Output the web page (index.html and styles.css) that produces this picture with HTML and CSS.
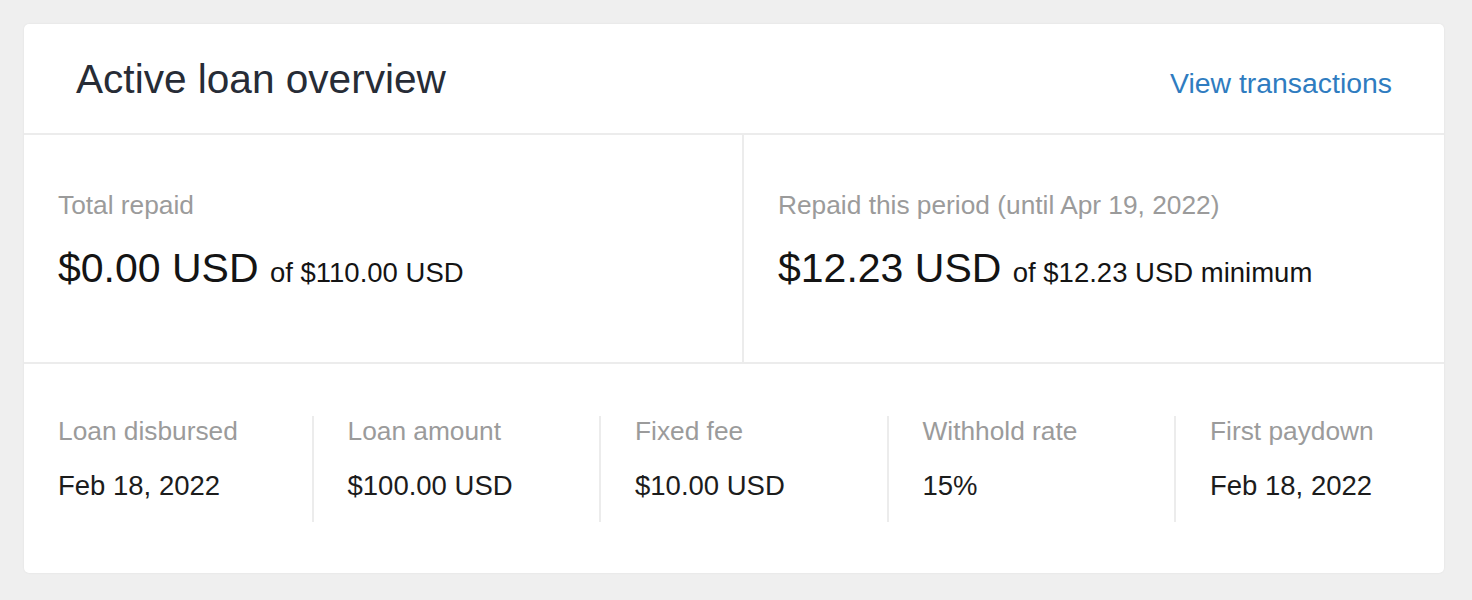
FILE: index.html
```html
<!DOCTYPE html>
<html>
<head>
  <title>Active loan overview</title>
  <link rel="stylesheet" href="styles.css">
</head>
<body>
  <div class="card">
    <div class="card-header">
      <h1>Active loan overview</h1>
      <a href="#" class="link">View transactions</a>
    </div>

    <div class="totals">
      <div class="total">
        <div class="label">Total repaid</div>
        <div class="amount">$0.00 USD <span class="of">of $110.00 USD</span></div>
      </div>
      <div class="total">
        <div class="label">Repaid this period (until Apr 19, 2022)</div>
        <div class="amount">$12.23 USD <span class="of">of $12.23 USD minimum</span></div>
      </div>
    </div>

    <div class="details">
      <div class="detail">
        <div class="label">Loan disbursed</div>
        <div class="value">Feb 18, 2022</div>
      </div>
      <div class="detail">
        <div class="label">Loan amount</div>
        <div class="value">$100.00 USD</div>
      </div>
      <div class="detail">
        <div class="label">Fixed fee</div>
        <div class="value">$10.00 USD</div>
      </div>
      <div class="detail">
        <div class="label">Withhold rate</div>
        <div class="value">15%</div>
      </div>
      <div class="detail">
        <div class="label">First paydown</div>
        <div class="value">Feb 18, 2022</div>
      </div>
    </div>
  </div>
</body>
</html>
```

FILE: styles.css
```css
body {
  margin: 0;
  padding: 24px 28px 24px 24px;
  background-color: #efefef;
  font-family: "Liberation Sans", Arial, sans-serif;
  color: #1c1c1c;
}

.card {
  background-color: white;
  border-radius: 5px;
  box-shadow: 0 0 2px rgba(0, 0, 0, 0.08);
}

.card-header {
  display: flex;
  justify-content: space-between;
  align-items: center;
  height: 109px;
  padding: 0 52px;
  border-bottom: 2px solid #ececec;
}

.card-header h1 {
  margin: 0;
  font-size: 40.6px;
  font-weight: normal;
  line-height: 48px;
  color: #272c36;
}

.link {
  margin-top: 8px;
  font-size: 28.4px;
  line-height: 32px;
  color: #2f7cc0;
  text-decoration: none;
}

.totals {
  display: grid;
  grid-template-columns: 718px 1fr;
  border-bottom: 2px solid #ececec;
}

.total {
  padding: 55px 34px 65px;
}

.total + .total {
  border-left: 2px solid #ececec;
}

.label {
  font-size: 26.3px;
  line-height: 30px;
  color: #9b9b9b;
}

.amount {
  margin-top: 24px;
  font-size: 41px;
  line-height: 48px;
  color: #141414;
}

.of {
  font-size: 27.5px;
}

.details {
  display: grid;
  grid-template-columns: repeat(4, 287.5px) 1fr;
  padding: 52px 0 51px;
}

.detail {
  padding: 0 0 20px 34px;
}

.detail + .detail {
  border-left: 2px solid #ececec;
}

.value {
  margin-top: 24px;
  font-size: 27.5px;
  line-height: 32px;
  color: #1c1c1c;
}
```
